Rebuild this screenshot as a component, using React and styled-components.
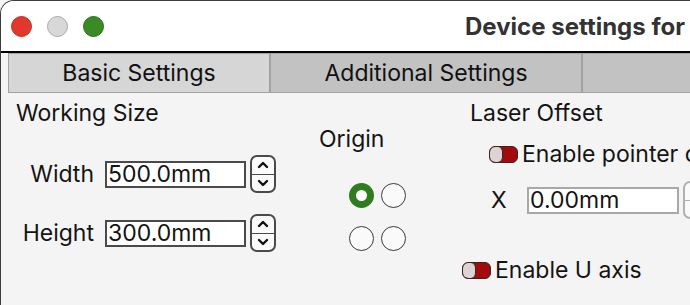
import React from 'react';
import styled, { createGlobalStyle } from 'styled-components';

const GlobalStyle = createGlobalStyle`
  html, body {
    margin: 0;
    padding: 0;
    background: #f4f4f4;
  }

  body {
    font-family: Inter, 'Liberation Sans', sans-serif;
    color: #141414;
  }
`;

const Window = styled.div`
  width: 690px;
  height: 305px;
  overflow: hidden;
  background: #f4f4f4;
  border-top: 1px solid #3c3c3c;
  border-left: 1px solid #3c3c3c;
  border-top-left-radius: 14px;
  box-sizing: border-box;
`;

const TitleBar = styled.div`
  display: flex;
  align-items: center;
  height: 50px;
  padding-left: 10px;
  background: #fff;
  border-bottom: 2px solid #000;
  overflow: hidden;
`;

const Light = styled.span`
  width: 21px;
  height: 21px;
  margin-right: 15px;
  border-radius: 50%;
  box-sizing: border-box;
  background: ${(p) => p.color};
  border: 1px solid ${(p) => p.edge};
  flex-shrink: 0;
`;

const Title = styled.div`
  margin-left: 346px;
  font-size: 24px;
  font-weight: 700;
  color: #333;
  white-space: nowrap;
  flex-shrink: 0;
`;

const TabBar = styled.div`
  display: flex;
  height: 40px;
  padding-left: 7px;
`;

const Tab = styled.div`
  display: flex;
  align-items: center;
  justify-content: center;
  width: ${(p) => p.width}px;
  flex-shrink: 0;
  box-sizing: border-box;
  background: ${(p) => (p.active ? '#d6d6d6' : '#c2c2c2')};
  border: 1px solid #a2a2a2;
  border-left-width: ${(p) => (p.first ? 1 : 0)}px;
  border-right-width: 2px;
  font-size: 23px;
  color: #111;
`;

const Body = styled.div`
  display: flex;
  padding-left: 15px;
`;

const Column = styled.div`
  display: flex;
  flex-direction: column;
  width: ${(p) => p.width}px;
  flex-shrink: 0;
  padding-top: ${(p) => p.top}px;
  box-sizing: border-box;
`;

const Heading = styled.div`
  font-size: 23px;
  line-height: 26px;
  margin-left: ${(p) => p.indent || 0}px;
`;

const FieldGrid = styled.div`
  display: grid;
  grid-template-columns: 89px 141px 30px;
  row-gap: 21px;
  align-items: center;
  margin-top: 29px;
`;

const Label = styled.div`
  font-size: 23px;
  text-align: right;
  padding-right: 11px;
`;

const Input = styled.div`
  height: 27px;
  box-sizing: border-box;
  border: 2px solid ${(p) => (p.dim ? '#a8a8a8' : '#4a4a4a')};
  background: #fff;
  font-size: 23px;
  line-height: 23px;
  padding-left: 1px;
  width: ${(p) => p.width || 141}px;
  flex-shrink: 0;
  white-space: nowrap;
`;

const Stepper = styled.div`
  display: flex;
  flex-direction: column;
  width: 26px;
  height: 38px;
  box-sizing: border-box;
  border: 2px solid ${(p) => (p.dim ? '#b0b0b0' : '#4a4a4a')};
  border-radius: 7px;
  background: #fafafa;
  margin-left: 4px;
  flex-shrink: 0;

  & > span {
    flex: 1;
    display: flex;
    align-items: center;
    justify-content: center;
  }

  & > span + span {
    border-top: 1.5px solid ${(p) => (p.dim ? '#b0b0b0' : '#4a4a4a')};
  }
`;

const RadioGrid = styled.div`
  display: grid;
  grid-template-columns: repeat(2, 25px);
  column-gap: 7px;
  row-gap: 18px;
  margin-top: 31px;
  margin-left: 30px;
`;

const Radio = styled.span`
  width: 25px;
  height: 25px;
  border-radius: 50%;
  box-sizing: border-box;
  background: ${(p) => (p.checked ? '#fff' : '#fafafa')};
  border: ${(p) => (p.checked ? '7px solid #2f7d1f' : '1.5px solid #3a3a3a')};
`;

const ToggleRow = styled.div`
  display: flex;
  align-items: center;
  gap: 4px;
  margin-left: ${(p) => p.indent}px;
  margin-top: ${(p) => p.top}px;
  font-size: 23px;
  white-space: nowrap;
`;

const Toggle = styled.span`
  display: flex;
  width: 29px;
  height: 17px;
  box-sizing: border-box;
  border: 1.5px solid #2a2a2a;
  border-radius: 6px;
  background: #a30a0a;
  overflow: hidden;
  flex-shrink: 0;

  &::before {
    content: '';
    width: 12px;
    height: 100%;
    background: #ddd3d3;
    border-right: 1.5px solid #2a2a2a;
    border-radius: 5px;
  }
`;

const OffsetRow = styled.div`
  display: flex;
  align-items: center;
  margin-left: 30px;
  margin-top: 13px;
`;

const AxisLabel = styled.span`
  width: 36px;
  flex-shrink: 0;
  font-size: 23px;
`;

function Chevron({ down, dim }) {
  return (
    <svg width="12" height="8" viewBox="0 0 12 8">
      <path
        d={down ? 'M2 2 L6 6 L10 2' : 'M2 6 L6 2 L10 6'}
        fill="none"
        stroke={dim ? '#999' : '#111'}
        strokeWidth="2.4"
        strokeLinecap="round"
        strokeLinejoin="round"
      />
    </svg>
  );
}

function Spin({ dim }) {
  return (
    <Stepper dim={dim}>
      <span>
        <Chevron dim={dim} />
      </span>
      <span>
        <Chevron down dim={dim} />
      </span>
    </Stepper>
  );
}

export default function App() {
  return (
    <>
      <GlobalStyle />
      <Window>
        <TitleBar>
          <Light color="#e0382c" edge="#c42b20" />
          <Light color="#d8d8d8" edge="#a9a9a9" />
          <Light color="#3a8a25" edge="#2d6d1b" />
          <Title>Device settings for</Title>
        </TitleBar>

        <TabBar>
          <Tab width={263} active first>
            Basic Settings
          </Tab>
          <Tab width={312}>Additional Settings</Tab>
          <Tab width={120} />
        </TabBar>

        <Body>
          <Column width={303} top={7}>
            <Heading>Working Size</Heading>
            <FieldGrid>
              <Label>Width</Label>
              <Input>500.0mm</Input>
              <Spin />
              <Label>Height</Label>
              <Input>300.0mm</Input>
              <Spin />
            </FieldGrid>
          </Column>

          <Column width={142} top={33}>
            <Heading>Origin</Heading>
            <RadioGrid>
              <Radio checked />
              <Radio />
              <Radio />
              <Radio />
            </RadioGrid>
          </Column>

          <Column width={260} top={7}>
            <Heading indent={9}>Laser Offset</Heading>
            <ToggleRow indent={28} top={14}>
              <Toggle />
              Enable pointer offset
            </ToggleRow>
            <OffsetRow>
              <AxisLabel>X</AxisLabel>
              <Input dim width={152}>
                0.00mm
              </Input>
              <Spin dim />
            </OffsetRow>
            <ToggleRow indent={1} top={37}>
              <Toggle />
              Enable U axis
            </ToggleRow>
          </Column>
        </Body>
      </Window>
    </>
  );
}
